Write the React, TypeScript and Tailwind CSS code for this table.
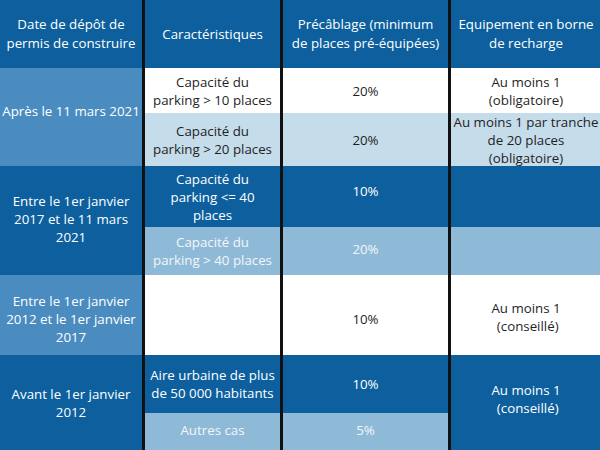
const dark = "bg-[#0d5f9e] text-white";
const medium = "bg-[#4a8cc0] text-white";
const light = "bg-[#c5dcea] text-[#1f1f1f]";
const mid = "bg-[#8fbad7] text-[#f2f6fa]";
const white = "bg-white text-[#1f1f1f]";

const Cell = ({
    className = "",
    children,
}: {
    className?: string;
    children?: React.ReactNode;
}) => (
    <div
        className={`flex items-center justify-center whitespace-nowrap text-center ${className}`}
    >
        <div>{children}</div>
    </div>
);

export default function App() {
    return (
        <div
            className="w-[600px] h-[450px] overflow-hidden bg-white text-[13.3px] leading-[18px]"
            style={{ fontFamily: '"Open Sans", "Noto Sans", sans-serif' }}
        >
            <div className="grid grid-cols-[142px_135px_165px_150px] grid-rows-[68px_45px_53px_61px_48px_80px_58px_37px] gap-x-[3px] bg-[#111]">
                {/* header */}
                <Cell className={`${dark} leading-[19px]`}>
                    Date de dépôt de
                    <br />
                    permis de construire
                </Cell>
                <Cell className={dark}>Caractéristiques</Cell>
                <Cell className={`${dark} leading-[19px]`}>
                    Précâblage (minimum
                    <br />
                    de places pré-équipées)
                </Cell>
                <Cell className={`${dark} leading-[19px]`}>
                    Equipement en borne
                    <br />
                    de recharge
                </Cell>

                {/* après le 11 mars 2021 */}
                <Cell className={`${medium} row-span-2 pb-3`}>
                    Après le 11 mars 2021
                </Cell>
                <Cell className={white}>
                    Capacité du
                    <br />
                    parking &gt; 10 places
                </Cell>
                <Cell className={white}>20%</Cell>
                <Cell className={white}>
                    Au moins 1
                    <br />
                    (obligatoire)
                </Cell>
                <Cell className={light}>
                    Capacité du
                    <br />
                    parking &gt; 20 places
                </Cell>
                <Cell className={light}>20%</Cell>
                <Cell className={light}>
                    Au moins 1 par tranche
                    <br />
                    de 20 places
                    <br />
                    (obligatoire)
                </Cell>

                {/* 2017 - 2021 */}
                <Cell className={`${dark} row-span-2 pb-1`}>
                    Entre le 1er janvier
                    <br />
                    2017 et le 11 mars
                    <br />
                    2021
                </Cell>
                <Cell className={dark}>
                    Capacité du
                    <br />
                    parking &lt;= 40
                    <br />
                    places
                </Cell>
                <Cell className={`${dark} pb-3`}>10%</Cell>
                <Cell className={dark} />
                <Cell className={mid}>
                    Capacité du
                    <br />
                    parking &gt; 40 places
                </Cell>
                <Cell className={`${mid} pb-1`}>20%</Cell>
                <Cell className={mid} />

                {/* 2012 - 2017 */}
                <Cell className={`${medium} pt-2`}>
                    Entre le 1er janvier
                    <br />
                    2012 et le 1er janvier
                    <br />
                    2017
                </Cell>
                <Cell className={white} />
                <Cell className={`${white} pt-2`}>10%</Cell>
                <Cell className={`${white} pt-1`}>
                    Au moins 1
                    <br />
                    &nbsp;(conseillé)
                </Cell>

                {/* avant 2012 */}
                <Cell className={`${dark} row-span-2`}>
                    Avant le 1er janvier
                    <br />
                    2012
                </Cell>
                <Cell className={dark}>
                    Aire urbaine de plus
                    <br />
                    de 50 000 habitants
                </Cell>
                <Cell className={dark}>10%</Cell>
                <Cell className={`${dark} row-span-2 pb-2`}>
                    Au moins 1
                    <br />
                    &nbsp;(conseillé)
                </Cell>
                <Cell className={`${mid} pb-1`}>Autres cas</Cell>
                <Cell className={`${mid} pb-1`}>5%</Cell>
            </div>
        </div>
    );
}
